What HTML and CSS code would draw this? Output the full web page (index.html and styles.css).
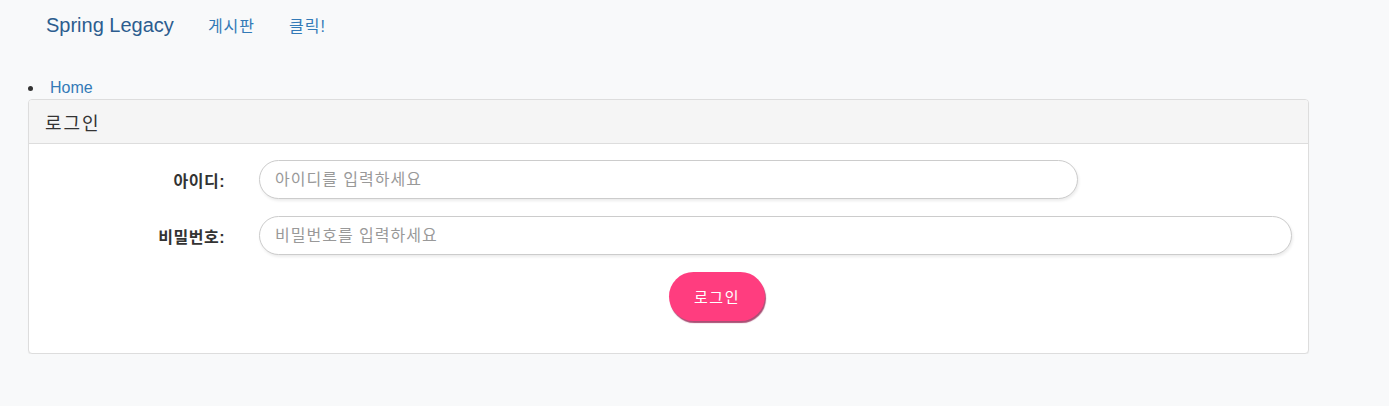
FILE: index.html
```html
<!DOCTYPE html>
<html lang="ko">
<head>
    <meta charset="UTF-8">
    <meta name="viewport" content="width=device-width, initial-scale=1.0">
    <title>Spring Legacy - 로그인</title>
    <link rel="stylesheet" href="styles.css">
</head>
<body>
    <nav class="navbar">
        <a class="brand" href="#">Spring Legacy</a>
        <a class="nav-link" href="#">게시판</a>
        <a class="nav-link" href="#">클릭!</a>
    </nav>
    <ul class="crumbs">
        <li><a href="#">Home</a></li>
    </ul>
    <div class="panel">
        <div class="panel-heading">로그인</div>
        <div class="panel-body">
            <form class="login-form" onsubmit="return false;">
                <div class="form-row">
                    <label for="userId">아이디:</label>
                    <input type="text" id="userId" class="field short" placeholder="아이디를 입력하세요">
                </div>
                <div class="form-row">
                    <label for="userPw">비밀번호:</label>
                    <input type="password" id="userPw" class="field" placeholder="비밀번호를 입력하세요">
                </div>
                <div class="actions">
                    <button type="submit" class="btn-login">로그인</button>
                </div>
            </form>
        </div>
    </div>
</body>
</html>
```

FILE: styles.css
```css
body {
    font-family: "Liberation Sans", Arial, "Noto Sans CJK KR", sans-serif;
    background-color: #f8f9fa;
    color: #333;
    margin: 0;
    font-size: 16px;
}
a {
    text-decoration: none;
}
.navbar {
    height: 50px;
    display: flex;
    align-items: center;
    padding-left: 46px;
    gap: 34px;
}
.brand {
    font-size: 20px;
    color: #2c5d8f;
}
.nav-link {
    font-size: 16px;
    color: #337ab7;
    letter-spacing: 1px;
}
.crumbs {
    margin: 27px 0 0;
    padding-left: 44px;
    line-height: 22px;
}
.crumbs li {
    padding-left: 6px;
}
.crumbs a {
    color: #337ab7;
}
.panel {
    margin-left: 28px;
    width: 1281px;
    box-sizing: border-box;
    background: white;
    border: 1px solid #ddd;
    border-radius: 4px;
    box-shadow: 0 1px 1px rgba(0, 0, 0, 0.05);
}
.panel-heading {
    background: #f5f5f5;
    border-bottom: 1px solid #ddd;
    border-radius: 3px 3px 0 0;
    height: 44px;
    box-sizing: border-box;
    padding: 0 16px;
    display: flex;
    align-items: center;
    font-size: 18px;
    letter-spacing: 2px;
}
.panel-body {
    padding: 16px 16px 32px 15px;
}
.form-row {
    display: grid;
    grid-template-columns: 181px 1fr;
    column-gap: 34px;
    align-items: center;
    margin-bottom: 17px;
}
.form-row label {
    text-align: right;
    font-weight: bold;
    font-size: 16px;
    letter-spacing: 0.5px;
}
.field {
    height: 39px;
    box-sizing: border-box;
    border: 1px solid #ccc;
    border-radius: 20px;
    padding: 0 15px;
    font-family: inherit;
    font-size: 16px;
    letter-spacing: 1px;
    color: #555;
    background: white;
    box-shadow: 1px 2px 3px rgba(0, 0, 0, 0.08);
    width: 100%;
}
.field::placeholder {
    color: #999;
}
.field.short {
    width: 819px;
}
.actions {
    padding-left: 625px;
}
.btn-login {
    width: 96px;
    height: 49px;
    border: none;
    border-radius: 25px;
    background: #ff3d7f;
    color: white;
    font-family: inherit;
    font-size: 15px;
    letter-spacing: 1.5px;
    cursor: pointer;
    box-shadow: 1px 2px 1px rgba(140, 20, 70, 0.75);
}
```
